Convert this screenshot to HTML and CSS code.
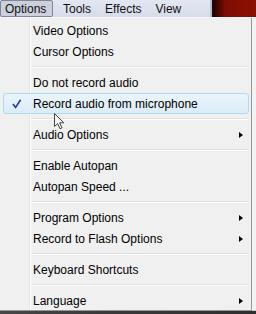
FILE: index.html
```html
<!DOCTYPE html>
<html lang="en">
<head>
  <meta charset="UTF-8">
  <title>Options menu</title>
  <link rel="stylesheet" href="styles.css">
</head>
<body>
  <div class="screen">
    <div class="menubar">
      <div class="bar-items">
        <span class="bar-item open">Options</span>
        <span class="bar-item">Tools</span>
        <span class="bar-item">Effects</span>
        <span class="bar-item">View</span>
      </div>
      <div class="bar-edge"></div>
      <div class="titlebar"></div>
    </div>

    <div class="menu-row">
      <ul class="menu">
        <li class="item"><span class="mark"></span>Video Options</li>
        <li class="item"><span class="mark"></span>Cursor Options</li>
        <li class="sep"></li>
        <li class="item"><span class="mark"></span>Do not record audio</li>
        <li class="item hot">
          <span class="mark">
            <svg width="10" height="10" viewBox="0 0 10 10"><path d="M1 5 L3.6 8.4 L8.6 0.8" fill="none" stroke="#23399b" stroke-width="1.6"/></svg>
          </span>Record audio from microphone
        </li>
        <li class="sep"></li>
        <li class="item sub"><span class="mark"></span>Audio Options</li>
        <li class="sep"></li>
        <li class="item"><span class="mark"></span>Enable Autopan</li>
        <li class="item"><span class="mark"></span>Autopan Speed ...</li>
        <li class="sep"></li>
        <li class="item sub"><span class="mark"></span>Program Options</li>
        <li class="item sub"><span class="mark"></span>Record to Flash Options</li>
        <li class="sep"></li>
        <li class="item"><span class="mark"></span>Keyboard Shortcuts</li>
        <li class="sep"></li>
        <li class="item sub"><span class="mark"></span>Language</li>
      </ul>
      <div class="side"></div>
    </div>

    <div class="taskstrip"></div>

    <svg class="pointer" width="12" height="17" viewBox="0 0 12 17">
      <path d="M0.5 0.5 L0.5 13.5 L3.6 10.6 L6 15.8 L8 14.9 L5.7 9.8 L9.8 9.8 Z" fill="#f4f4f4" stroke="#444" stroke-width="1" stroke-linejoin="round"/>
    </svg>
  </div>
</body>
</html>
```

FILE: styles.css
```css
* { box-sizing: border-box; margin: 0; padding: 0; }
body { width: 256px; height: 314px; overflow: hidden; background: #3b3b3b;
  font-family: "Liberation Sans", Arial, sans-serif; font-size: 12px; color: #000; }
.screen { position: relative; width: 256px; height: 314px; display: flex; flex-direction: column; }

/* top menu bar */
.menubar { display: flex; height: 18px; border-bottom: 1px solid #f6f7fa; }
.bar-items { width: 210px; display: flex; align-items: stretch; gap: 2px;
  background: linear-gradient(#e2e7f1, #d6dcea); }
.bar-item { display: flex; align-items: center; padding: 0 6px; color: #101010; }
.bar-item.open { padding: 0 5px 0 4px; margin-left: 0; width: 53px;
  background: #cbd0dc; border: 1px solid #7f8697; border-radius: 2px; }
.bar-item.open + .bar-item { margin-left: 2px; }
.bar-edge { width: 3px; background: linear-gradient(to right, #cdb9cc 1px, #9fc3cc 1px, #9fc3cc 2px, #2a0a08 2px); }
.titlebar { flex: 1; background: linear-gradient(to right, #1c0403, #7d0c02 12px, #8a0f02 30px, #8b1204); }

/* dropdown */
.menu-row { display: flex; height: 293px; }
.menu { list-style: none; width: 252px; padding-top: 2px;
  border-right: 1px solid #979797; border-bottom: 1px solid #979797;
  background: linear-gradient(to right, #f0f0f0 29px, #e2e3e3 29px, #e2e3e3 30px, #fff 30px, #fff 31px, #f0f0f0 31px); }
.side { flex: 1; background: #f3f3f3; border-bottom: 1px solid #c9c9c9; }

.item { height: 21px; display: flex; align-items: center; white-space: nowrap; }
.mark { width: 33px; height: 100%; display: flex; align-items: center; justify-content: center; flex-shrink: 0; }
.item.sub::after { content: ""; margin-left: auto; margin-right: 8px;
  border-left: 4px solid #000; border-top: 3.5px solid transparent; border-bottom: 3.5px solid transparent; }

.item.hot { margin: 0 2px 0 3px; border: 1px solid #aedaee; border-radius: 3px;
  background: linear-gradient(#eaf4fb, #dcecf8); }
.item.hot .mark { width: 29px; padding-right: 3px; }

.sep { height: 10px; margin-left: 31px; margin-right: 3px;
  background: linear-gradient(transparent 4px, #e0e0e0 4px, #e0e0e0 5px, #fff 5px, #fff 6px, transparent 6px); }

.taskstrip { flex: 1; background: linear-gradient(to right, #474747, #3a3a3a 40%, #2f2f2f); }

/* mouse pointer over the menu */
.pointer { position: absolute; left: 54px; top: 113px; }
```
